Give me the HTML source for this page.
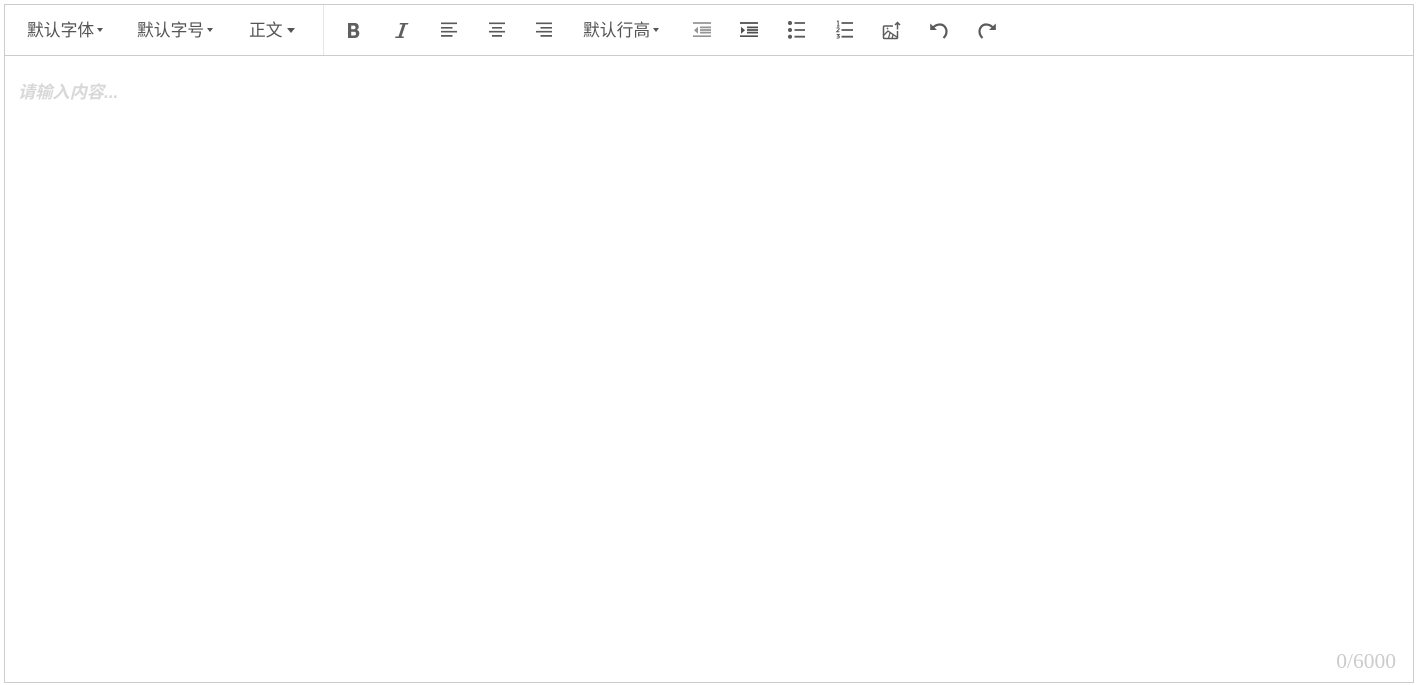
<!DOCTYPE html>
<html lang="zh"><head><meta charset="utf-8"><title>编辑器</title>
<style>
html,body{margin:0;padding:0;width:1419px;height:685px;overflow:hidden;background:#fff}
body{font-family:"Liberation Sans","Noto Sans CJK SC",sans-serif;color:#555;position:relative}
.box{position:absolute;left:4px;top:4px;width:1408px;height:677px;border:1px solid #ccc}
.line{position:absolute;left:5px;top:55px;width:1408px;height:1px;background:#ccc}
.sep{position:absolute;left:323px;top:5px;width:1px;height:50px;background:#e6e6e6}
.t{position:absolute;top:19px;font-size:16.8px;line-height:24px;white-space:nowrap;font-weight:400}
.c{position:absolute;width:0;height:0;border-left:3px solid transparent;border-right:3px solid transparent;border-top:4px solid #555;top:28px}
.ph{position:absolute;left:18px;top:80px;font-size:17.2px;line-height:24px;font-style:italic;font-weight:700;color:#d8d8d8;white-space:nowrap}
.n{position:absolute;right:23px;top:649px;font:21.5px/24px "Liberation Serif",serif;color:#ccc}
svg{position:absolute;top:20px;width:20px;height:20px;overflow:visible}
</style></head><body>
<div class="box"></div><div class="line"></div><div class="sep"></div>
<div class="t" style="left:27px">默认字体</div><div class="c" style="left:97px"></div>
<div class="t" style="left:137px">默认字号</div><div class="c" style="left:207px"></div>
<div class="t" style="left:249px">正文</div><div class="c" style="left:287px;border-left-width:4px;border-right-width:4px;border-top-width:5px"></div>
<div class="t" style="left:583px">默认行高</div><div class="c" style="left:653px"></div>

<svg style="left:344px" viewBox="0 0 20 20"><path fill="#5f5f5f" fill-rule="evenodd" d="M4 3h6.200c3 0 4.500 1.300 4.500 3.900 0 1.500-.7 2.500-2 3 1.700.4 2.600 1.600 2.600 3.400 0 2.800-1.700 4.700-4.800 4.700H4zM7.200 5.600v3.700h2.400c1.300 0 1.900-.6 1.900-1.900s-.6-1.800-1.900-1.800zM7.200 11.700v3.800h2.800c1.300 0 2-.6 2-1.900s-.7-1.900-2-1.900z"/></svg>
<svg style="left:392px" viewBox="0 0 20 20"><path fill="#5f5f5f" d="M8 3H16.500L16 4.500H13.500L9.500 16.500H12L11.500 18H3L3.500 16.500H6.500L10.500 4.500H7.500z"/></svg>

<svg style="left:439px" viewBox="0 0 20 20"><path stroke="#5a5a5a" stroke-width="1.700" d="M2 3.300h16M2 7.800h11.500M2 11.700h16M2 15.900h11.500"/></svg>
<svg style="left:487px" viewBox="0 0 20 20"><path stroke="#5a5a5a" stroke-width="1.700" d="M2 3.300h16M5 7.800h10M2 11.700h16M5 15.900h10"/></svg>
<svg style="left:534px" viewBox="0 0 20 20"><path stroke="#5a5a5a" stroke-width="1.700" d="M2 3.300h16M6.500 7.800h11.500M2 11.700h16M6.500 15.900h11.500"/></svg>

<svg style="left:692px" viewBox="0 0 20 20" opacity=".62"><path stroke="#555" stroke-width="1.700" d="M1 3h18M8 7.400h11M8 10h11M8 12.600h11M1 16.200h18" fill="none"/><path fill="#555" d="M6 6.800v7l-4-3.500z"/></svg>
<svg style="left:739px" viewBox="0 0 20 20"><path stroke="#4f4f4f" stroke-width="1.700" d="M1 3h18M8 7.400h11M8 10h11M8 12.600h11M1 16.200h18" fill="none"/><path fill="#4f4f4f" d="M2 6.800v7l4-3.500z"/></svg>

<svg style="left:786px" viewBox="0 0 20 20"><g fill="#5a5a5a"><circle cx="4" cy="3" r="2"/><circle cx="4" cy="10" r="2"/><circle cx="4" cy="16.700" r="2"/></g><path stroke="#5a5a5a" stroke-width="1.800" d="M8.500 3h10.500M8.500 10h10.500M8.500 16.700h10.500"/></svg>
<svg style="left:834px" viewBox="0 0 20 20"><path stroke="#5a5a5a" stroke-width="1.800" d="M7.500 3h11.500M7.500 10h11.500M7.500 16.700h11.500"/><path stroke="#5a5a5a" stroke-width="1" fill="none" d="M3 1.500l1.200-.5v5M3 6h2.500M2.600 8.300c.5-.8 2.600-.8 2.600.5 0 1-1.700 1.700-2.600 3h2.800M2.700 14.500h2.500l-1.300 1.500c1 0 1.500.5 1.500 1.100 0 1-1.700 1.300-2.700.7"/></svg>

<svg style="left:881px" viewBox="0 0 20 20"><path fill="none" stroke="#5a5a5a" stroke-width="1.500" stroke-linejoin="round" d="M12 6H3.500C2.900 6 2.500 6.400 2.500 7v10.500c0 .6.400 1 1 1h12c.6 0 1-.4 1-1V11"/><path fill="none" stroke="#5a5a5a" stroke-width="1.300" d="M2.500 15.500l4.500-4.500 9.500 6.500M9 13l-1.500 5M12 15l-1 3.500"/><circle cx="6.500" cy="8.500" r=".9" fill="#5a5a5a"/><path stroke="#5a5a5a" stroke-width="1.500" fill="none" d="M16.500 9.500V2.800M14 5l2.500-2.500L19 5"/></svg>

<svg style="left:929px" viewBox="0 0 20 20"><path fill="none" stroke="#5a5a5a" stroke-width="2.200" d="M4 7.500C6 5.500 8 4.500 11 4.500 15 4.500 17.500 8 17.500 11.500 17.500 14 16 16.500 14.500 18"/><path fill="#5a5a5a" d="M1.200 3.500V10H8z"/></svg>
<svg style="left:977px" viewBox="0 0 20 20"><path fill="none" stroke="#5a5a5a" stroke-width="2.200" d="M16 7.500C14 5.500 12 4.500 9 4.500 5 4.500 2.500 8 2.500 11.500 2.500 14 4 16.500 5.500 18"/><path fill="#5a5a5a" d="M18.800 3.500V10H12z"/></svg>

<div class="ph">请输入内容...</div>
<div class="n">0/6000</div>
</body></html>
